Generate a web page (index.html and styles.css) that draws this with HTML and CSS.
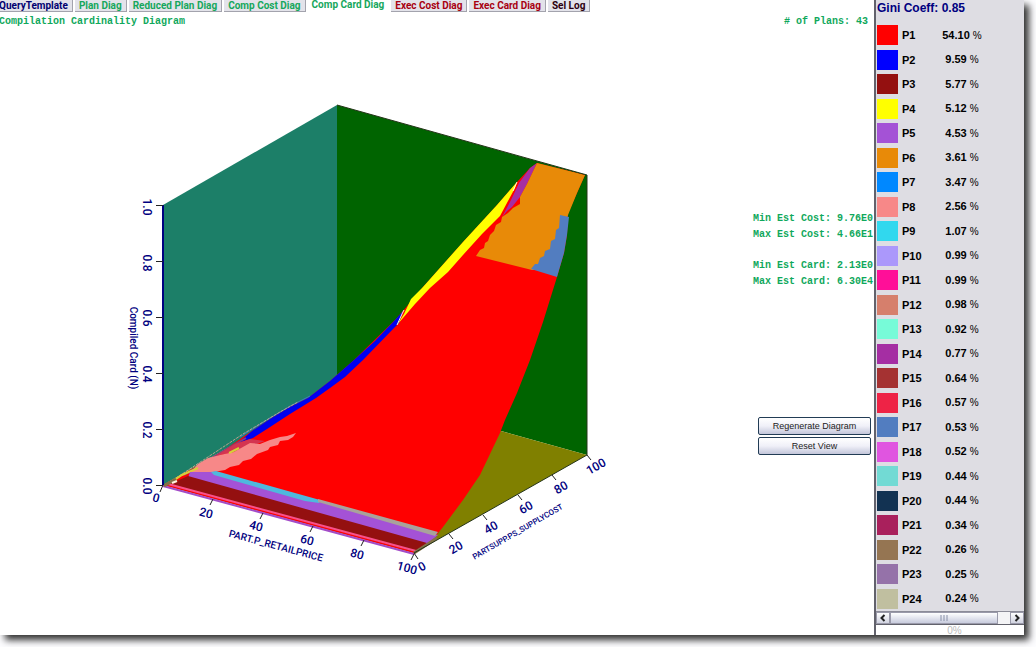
FILE: index.html
```html
<!DOCTYPE html>
<html lang="en">
<head>
<meta charset="utf-8">
<title>Compilation Cardinality Diagram</title>
<link rel="stylesheet" href="styles.css">
</head>
<body>
<div class="window">
  <main class="main">
    <nav class="tabs">
      <button class="tab navy" type="button">QueryTemplate</button>
      <button class="tab" type="button">Plan Diag</button>
      <button class="tab" type="button">Reduced Plan Diag</button>
      <button class="tab" type="button">Comp Cost Diag</button>
      <button class="tab active" type="button">Comp Card Diag</button>
      <button class="tab red" type="button">Exec Cost Diag</button>
      <button class="tab red" type="button">Exec Card Diag</button>
      <button class="tab dark" type="button">Sel Log</button>
    </nav>
    <header class="heading mono">
      <span class="title">Compilation Cardinality Diagram</span>
      <span># of Plans: 43</span>
    </header>
    <div class="content">
      <svg class="chart" viewBox="0 30 750 605" preserveAspectRatio="xMinYMin meet" role="img" aria-label="Compiled cardinality surface">
        <polygon fill="#1c7f68" points="163,205 337,105 337,385 163,485"/>
        <polygon fill="#006400" points="337,105 587,175 587,455 337,385"/>
        <polygon fill="#808000" points="163,485 337,385 587,455 414,553"/>
        <!-- surface -->
        <polygon fill="#ff0000" points="163,485 190,470 220,453 243,437 270,419 290,407 308,398 330,381 354,360 395,320 402,312 423,287 463,242 497,205 517,182 530,168 537,163 585,175 568,213 567,235 564,253 557,277 543,322 530,360 517,393 505,420 500,433 480,475 463,500 443,527 435,537 414,553"/>
        <polygon fill="#0000f0" points="238,443 252,431 270,419 290,407 308,398 330,381 354,360 375,341 395,320 403,311 399,323 395,327 363,360 345,377 330,388 316,398 290,414 267,429 253,438"/>
        <path d="M240 437L270 418L290 406L310 396" fill="none" stroke="#3c78c8" stroke-width="1"/>
        <path d="M176 478L243 434L280 412L298 402" fill="none" stroke="#b9a58c" stroke-width="1" stroke-dasharray="3 1"/>
        <path d="M184 475L220 453L246 438" fill="none" stroke="#853c80" stroke-width="2"/>
        <polygon fill="#ffff00" points="404,314 411,299 423,287 463,242 497,205 517,182 515,188 500,216 482,234 463,255 448,272 430,288 415,304 397,325"/>
        <path d="M397 325L402 314L404 310M517 182L513 191" fill="none" stroke="#fff6dd" stroke-width="1"/>
        <polygon fill="#d43450" points="215,456 235,444 250,439 265,441 235,452"/>
        <polygon fill="#f78888" points="190,473 198,464 208,458 220,455 234,452 250,443 260,444 270,440 280,437 287,436 296,433 293,437 288,440 280,441 278,445 270,447 268,450 257,454 251,459 243,461 239,465 230,467 225,470 213,472"/>
        <path d="M170 483L182 475L198 468M229 453L239 448" fill="none" stroke="#d8cf38" stroke-width="2"/>
        <polygon fill="#a452d6" points="190,472 213,472 438,535 427,544 188,478"/>
        <polygon fill="#4fb8dd" points="211,472 216,471 320,500 319,503 305,501 214,475"/>
        <polygon fill="#a9a29b" points="318,499 438,532 435,536 318,502"/>
        <polygon fill="#941010" points="170,484 188,476 427,543 416,552"/>
        <path d="M168 484L416 551" fill="none" stroke="#f8508c" stroke-width="2"/>
        <path d="M163 486L414 554" fill="none" stroke="#a24cc8" stroke-width="2"/>
        <path d="M164 486L176 479M414 553L437 538" fill="none" stroke="#827247" stroke-width="3"/>
        <path d="M172 483L177 481" fill="none" stroke="#fff2dd" stroke-width="2"/>
        <polygon fill="#a52ea3" points="537,163 530,168 519,183 511,200 502,217 507,211 512,207 516,202 520,197 527,184"/>
        <polygon fill="#e88a08" points="537,163 585,175 577,193 568,215 557,260 540,270 532,270 476,256 480,250 484,248 485,243 488,241 490,235 494,231 496,225 501,222 502,217 508,213 513,208 520,204 520,197 527,184"/>
        <polygon fill="#527dc0" points="560,215 569,217 567,235 564,253 557,277 531,269 535,264 538,264 540,258 544,256 545,251 550,249 551,241 555,239 556,230 559,228"/>
        <path d="M337 105L587 175V455L414 553" fill="none" stroke="#243418" stroke-width="1"/>
        <!-- axes -->
        <path class="axis" d="M163 205V485"/>
        <path class="tick" d="M156 205.500h7M156 261.500h7M156 317.500h7M156 373.500h7M156 429.500h7M156 485.500h7M163 485l-3 7M213 499l-3 6M263 513l-3 6M313 526l-3 6M364 540l-3 6M414 554l-3 6M414 553l4 6M449 534l4 5M483 515l4 5M518 495l4 5M552 475l4 5M587 455l4 5"/>
        <g class="labels">
          <text transform="translate(143 207) rotate(90)">1.0</text>
          <text transform="translate(143 263) rotate(90)">0.8</text>
          <text transform="translate(143 318) rotate(90)">0.6</text>
          <text transform="translate(143 374) rotate(90)">0.4</text>
          <text transform="translate(143 430) rotate(90)">0.2</text>
          <text transform="translate(143 486) rotate(90)">0.0</text>
          <text transform="translate(155 502) rotate(15)">0</text>
          <text transform="translate(205 517) rotate(15)">20</text>
          <text transform="translate(255 530) rotate(15)">40</text>
          <text transform="translate(306 544) rotate(15)">60</text>
          <text transform="translate(356 558) rotate(15)">80</text>
          <text transform="translate(406 572) rotate(15)">100</text>
          <text transform="translate(424 570) rotate(-30)">0</text>
          <text transform="translate(458 551) rotate(-30)">20</text>
          <text transform="translate(493 531) rotate(-30)">40</text>
          <text transform="translate(528 511) rotate(-30)">60</text>
          <text transform="translate(563 491) rotate(-30)">80</text>
          <text transform="translate(598 470) rotate(-30)">100</text>
          <text class="name" transform="translate(130 348) rotate(90)">Compiled Card (N)</text>
          <text class="name" transform="translate(275 549) rotate(15)">PART.P_RETAILPRICE</text>
          <text class="name small" transform="translate(519 534) rotate(-30)">PARTSUPP.PS_SUPPLYCOST</text>
        </g>
      </svg>
      <aside class="side">
        <div class="stats mono">
          <p>Min Est Cost: 9.76E0</p>
          <p>Max Est Cost: 4.66E1</p>
        </div>
        <div class="stats mono">
          <p>Min Est Card: 2.13E0</p>
          <p>Max Est Card: 6.30E4</p>
        </div>
        <div class="actions">
          <button class="action" type="button">Regenerate Diagram</button>
          <button class="action" type="button">Reset View</button>
        </div>
      </aside>
    </div>
  </main>
  <section class="legend">
    <h2 class="gini">Gini Coeff: 0.85</h2>
    <table class="plans">
      <tbody>
        <tr><td class="swatch p1"></td><th scope="row">P1</th><td class="share">54.10 <small>%</small></td></tr>
        <tr><td class="swatch p2"></td><th scope="row">P2</th><td class="share">9.59 <small>%</small></td></tr>
        <tr><td class="swatch p3"></td><th scope="row">P3</th><td class="share">5.77 <small>%</small></td></tr>
        <tr><td class="swatch p4"></td><th scope="row">P4</th><td class="share">5.12 <small>%</small></td></tr>
        <tr><td class="swatch p5"></td><th scope="row">P5</th><td class="share">4.53 <small>%</small></td></tr>
        <tr><td class="swatch p6"></td><th scope="row">P6</th><td class="share">3.61 <small>%</small></td></tr>
        <tr><td class="swatch p7"></td><th scope="row">P7</th><td class="share">3.47 <small>%</small></td></tr>
        <tr><td class="swatch p8"></td><th scope="row">P8</th><td class="share">2.56 <small>%</small></td></tr>
        <tr><td class="swatch p9"></td><th scope="row">P9</th><td class="share">1.07 <small>%</small></td></tr>
        <tr><td class="swatch p10"></td><th scope="row">P10</th><td class="share">0.99 <small>%</small></td></tr>
        <tr><td class="swatch p11"></td><th scope="row">P11</th><td class="share">0.99 <small>%</small></td></tr>
        <tr><td class="swatch p12"></td><th scope="row">P12</th><td class="share">0.98 <small>%</small></td></tr>
        <tr><td class="swatch p13"></td><th scope="row">P13</th><td class="share">0.92 <small>%</small></td></tr>
        <tr><td class="swatch p14"></td><th scope="row">P14</th><td class="share">0.77 <small>%</small></td></tr>
        <tr><td class="swatch p15"></td><th scope="row">P15</th><td class="share">0.64 <small>%</small></td></tr>
        <tr><td class="swatch p16"></td><th scope="row">P16</th><td class="share">0.57 <small>%</small></td></tr>
        <tr><td class="swatch p17"></td><th scope="row">P17</th><td class="share">0.53 <small>%</small></td></tr>
        <tr><td class="swatch p18"></td><th scope="row">P18</th><td class="share">0.52 <small>%</small></td></tr>
        <tr><td class="swatch p19"></td><th scope="row">P19</th><td class="share">0.44 <small>%</small></td></tr>
        <tr><td class="swatch p20"></td><th scope="row">P20</th><td class="share">0.44 <small>%</small></td></tr>
        <tr><td class="swatch p21"></td><th scope="row">P21</th><td class="share">0.34 <small>%</small></td></tr>
        <tr><td class="swatch p22"></td><th scope="row">P22</th><td class="share">0.26 <small>%</small></td></tr>
        <tr><td class="swatch p23"></td><th scope="row">P23</th><td class="share">0.25 <small>%</small></td></tr>
        <tr><td class="swatch p24"></td><th scope="row">P24</th><td class="share">0.24 <small>%</small></td></tr>
      </tbody>
    </table>
    <div class="scrollbar">
      <button class="arrow" type="button" aria-label="Scroll left"><svg viewBox="0 0 8 8"><path d="M5.500 1L2.500 4L5.500 7"/></svg></button>
      <div class="track"><div class="thumb"><svg viewBox="0 0 8 6"><path d="M1 0V6M4 0V6M7 0V6"/></svg></div></div>
      <button class="arrow" type="button" aria-label="Scroll right"><svg viewBox="0 0 8 8"><path d="M2.500 1L5.500 4L2.500 7"/></svg></button>
    </div>
    <div class="progress">0%</div>
  </section>
</div>
</body>
</html>
```
FILE: styles.css
```css
* { box-sizing: border-box; }

body {
  margin: 0;
  background: #fdfdff;
  font-family: "Liberation Sans", Arial, sans-serif;
  overflow: hidden;
}

p, h2 { margin: 0; }

.window {
  display: flex;
  min-height: calc(100vh - 12px);
  margin: 0 12px 12px 0;
  background: #fff;
  box-shadow: 5px 5px 7px #333;
}

.main {
  flex: 1;
  min-width: 0;
  display: flex;
  flex-direction: column;
}

.tabs {
  display: flex;
  gap: 2px;
  height: 12px;
  margin-left: -6px;
}

.tab {
  height: 12px;
  padding: 0 4px 0 5px;
  border: 0;
  border-right: 1px solid #a3a3ad;
  border-bottom: 1px solid #a3a3ad;
  background: #e3e3ea;
  color: #16a75c;
  font: bold 10px/10px Roboto, sans-serif;
  white-space: nowrap;
}

.tab + .tab { padding-left: 4px; }

.tab.active {
  padding-bottom: 3px;
  border-color: transparent;
  background: #fff;
}

.tab.navy { color: #000070; }
.tab.red { color: #a80010; }
.tab.dark { color: #2c0010; }

.mono {
  color: #10a85c;
  font: bold 10px/16px "Liberation Mono", monospace;
}

.heading {
  display: flex;
  justify-content: space-between;
  height: 18px;
  padding: 2px 6px 0 0;
}

.title { margin-left: -1px; }

.content {
  flex: 1;
  display: flex;
}

.chart {
  flex: 1;
  min-width: 0;
  align-self: flex-start;
}

.axis { fill: none; stroke: #000080; stroke-width: 2; }
.tick { fill: none; stroke: #222; stroke-width: 1; }

.labels {
  fill: #000080;
  stroke: none;
  font: 500 12px Roboto, sans-serif;
  text-anchor: middle;
}

.name { font-size: 10px; }
.name.small { font-size: 8px; }

.side {
  width: 124px;
  padding-top: 181px;
}

.stats {
  margin-bottom: 15px;
  white-space: nowrap;
  text-align: right;
  padding-right: 1px;
}

.actions {
  display: flex;
  flex-direction: column;
  gap: 2px;
  margin-top: 127px;
  padding: 0 3px 0 8px;
}

.action {
  height: 18px;
  padding: 0;
  border: 1px solid #223c55;
  border-radius: 2px;
  background: linear-gradient(#fff, #f0f0f8 50%, #c3c6da);
  color: #222;
  font: 9px/14px "Liberation Sans", sans-serif;
}

.legend {
  width: 150px;
  display: flex;
  flex-direction: column;
  border-left: 2px solid #62626c;
  background: #dedde3;
}

.gini {
  height: 23px;
  padding-left: 1px;
  color: #000080;
  font: bold 12px/16px "Liberation Sans", sans-serif;
}

.plans {
  flex: 1;
  display: flex;
  flex-direction: column;
}

.plans tbody {
  flex: 1;
  display: grid;
  grid-auto-rows: 1fr;
}

.plans tr {
  display: grid;
  grid-template-columns: 21px 28px 56px;
  column-gap: 4px;
  align-items: center;
  padding-left: 1px;
  font-size: 11px;
  line-height: 20px;
}

.plans td, .plans th { padding: 0; text-align: left; font-weight: bold; }
.plans .share { text-align: center; }
.share small { font-size: 10px; font-weight: normal; }
.swatch { height: 20px; }

.p1 { background: #ff0000; }
.p2 { background: #0000ff; }
.p3 { background: #941010; }
.p4 { background: #ffff00; }
.p5 { background: #a452d6; }
.p6 { background: #e88a08; }
.p7 { background: #0088ff; }
.p8 { background: #f78888; }
.p9 { background: #31d8ee; }
.p10 { background: #ab98fb; }
.p11 { background: #ff0f98; }
.p12 { background: #d67f6c; }
.p13 { background: #77fbd8; }
.p14 { background: #a52ea3; }
.p15 { background: #a53232; }
.p16 { background: #ee2346; }
.p17 { background: #527dc0; }
.p18 { background: #e055e0; }
.p19 { background: #72dad4; }
.p20 { background: #123252; }
.p21 { background: #a9205c; }
.p22 { background: #957552; }
.p23 { background: #9572a9; }
.p24 { background: #c0bfa0; }

.scrollbar {
  display: flex;
  height: 14px;
  border-top: 1px solid #8c8c98;
  border-bottom: 1px solid #62626c;
}

.arrow {
  width: 14px;
  padding: 0;
  border: 1px solid #9a9aaa;
  background: linear-gradient(#fff, #d0d2e0);
  display: flex;
  align-items: center;
  justify-content: center;
}

.arrow svg { width: 8px; height: 8px; }
.arrow path { fill: none; stroke: #222; stroke-width: 2; }

.track { flex: 1; background: #f4f4f6; }

.thumb {
  width: 90%;
  height: 12px;
  display: flex;
  align-items: center;
  justify-content: center;
  border: 1px solid #9a9aaa;
  background: linear-gradient(#fff, #c8cbdd);
}

.thumb svg { width: 8px; height: 6px; }
.thumb path { stroke: #8890a8; stroke-width: 1; }

.progress {
  height: 10px;
  padding-left: 9px;
  background: #fff;
  color: #bcbcbc;
  font-size: 10px;
  line-height: 12px;
  text-align: center;
}
```
